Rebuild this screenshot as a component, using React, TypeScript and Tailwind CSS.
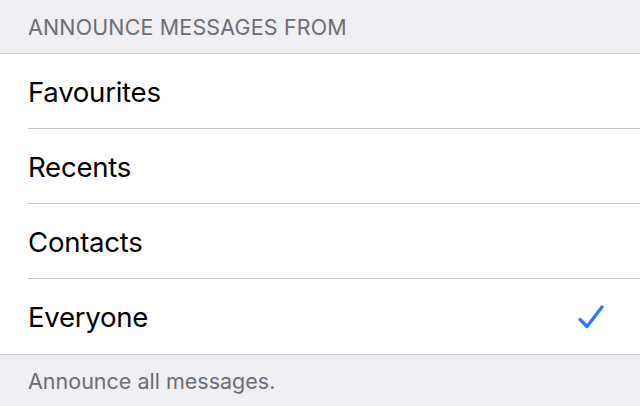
import { useState } from 'react'

const OPTIONS = ['Favourites', 'Recents', 'Contacts', 'Everyone']

function Check() {
  return (
    <svg width="28" height="26" viewBox="0 0 28 26" fill="none">
      <path d="M3 15.5 L10 22.5 L25 3" stroke="#3478f6" strokeWidth="3.4" strokeLinecap="round" strokeLinejoin="round" />
    </svg>
  )
}

export default function App() {
  const [selected, setSelected] = useState('Everyone')

  return (
    <div className="w-[640px] h-[406px] bg-[#efeff4] overflow-hidden" style={{ fontFamily: 'Inter, "Noto Sans", sans-serif' }}>
      <div className="h-[53px] px-[28px] pt-[15px] text-[21.4px] leading-[24px] text-[#6d6d72] tracking-[0.01em]">
        ANNOUNCE MESSAGES FROM
      </div>
      <div className="bg-white border-y border-[#c8c7cc]">
        {OPTIONS.map((opt, i) => (
          <div key={opt} onClick={() => setSelected(opt)} className="pl-[28px] cursor-pointer">
            <div className={`h-[75px] flex items-center justify-between pr-[35px] ${i < OPTIONS.length - 1 ? 'border-b border-[#c8c7cc]' : ''}`}>
              <span className="pt-[3px] text-[27.6px] text-black tracking-[-0.01em]">{opt}</span>
              {selected === opt && <Check />}
            </div>
          </div>
        ))}
      </div>
      <div className="px-[28px] pt-[13px] text-[21.5px] leading-[26px] text-[#6d6d72]">
        Announce all messages.
      </div>
    </div>
  )
}
